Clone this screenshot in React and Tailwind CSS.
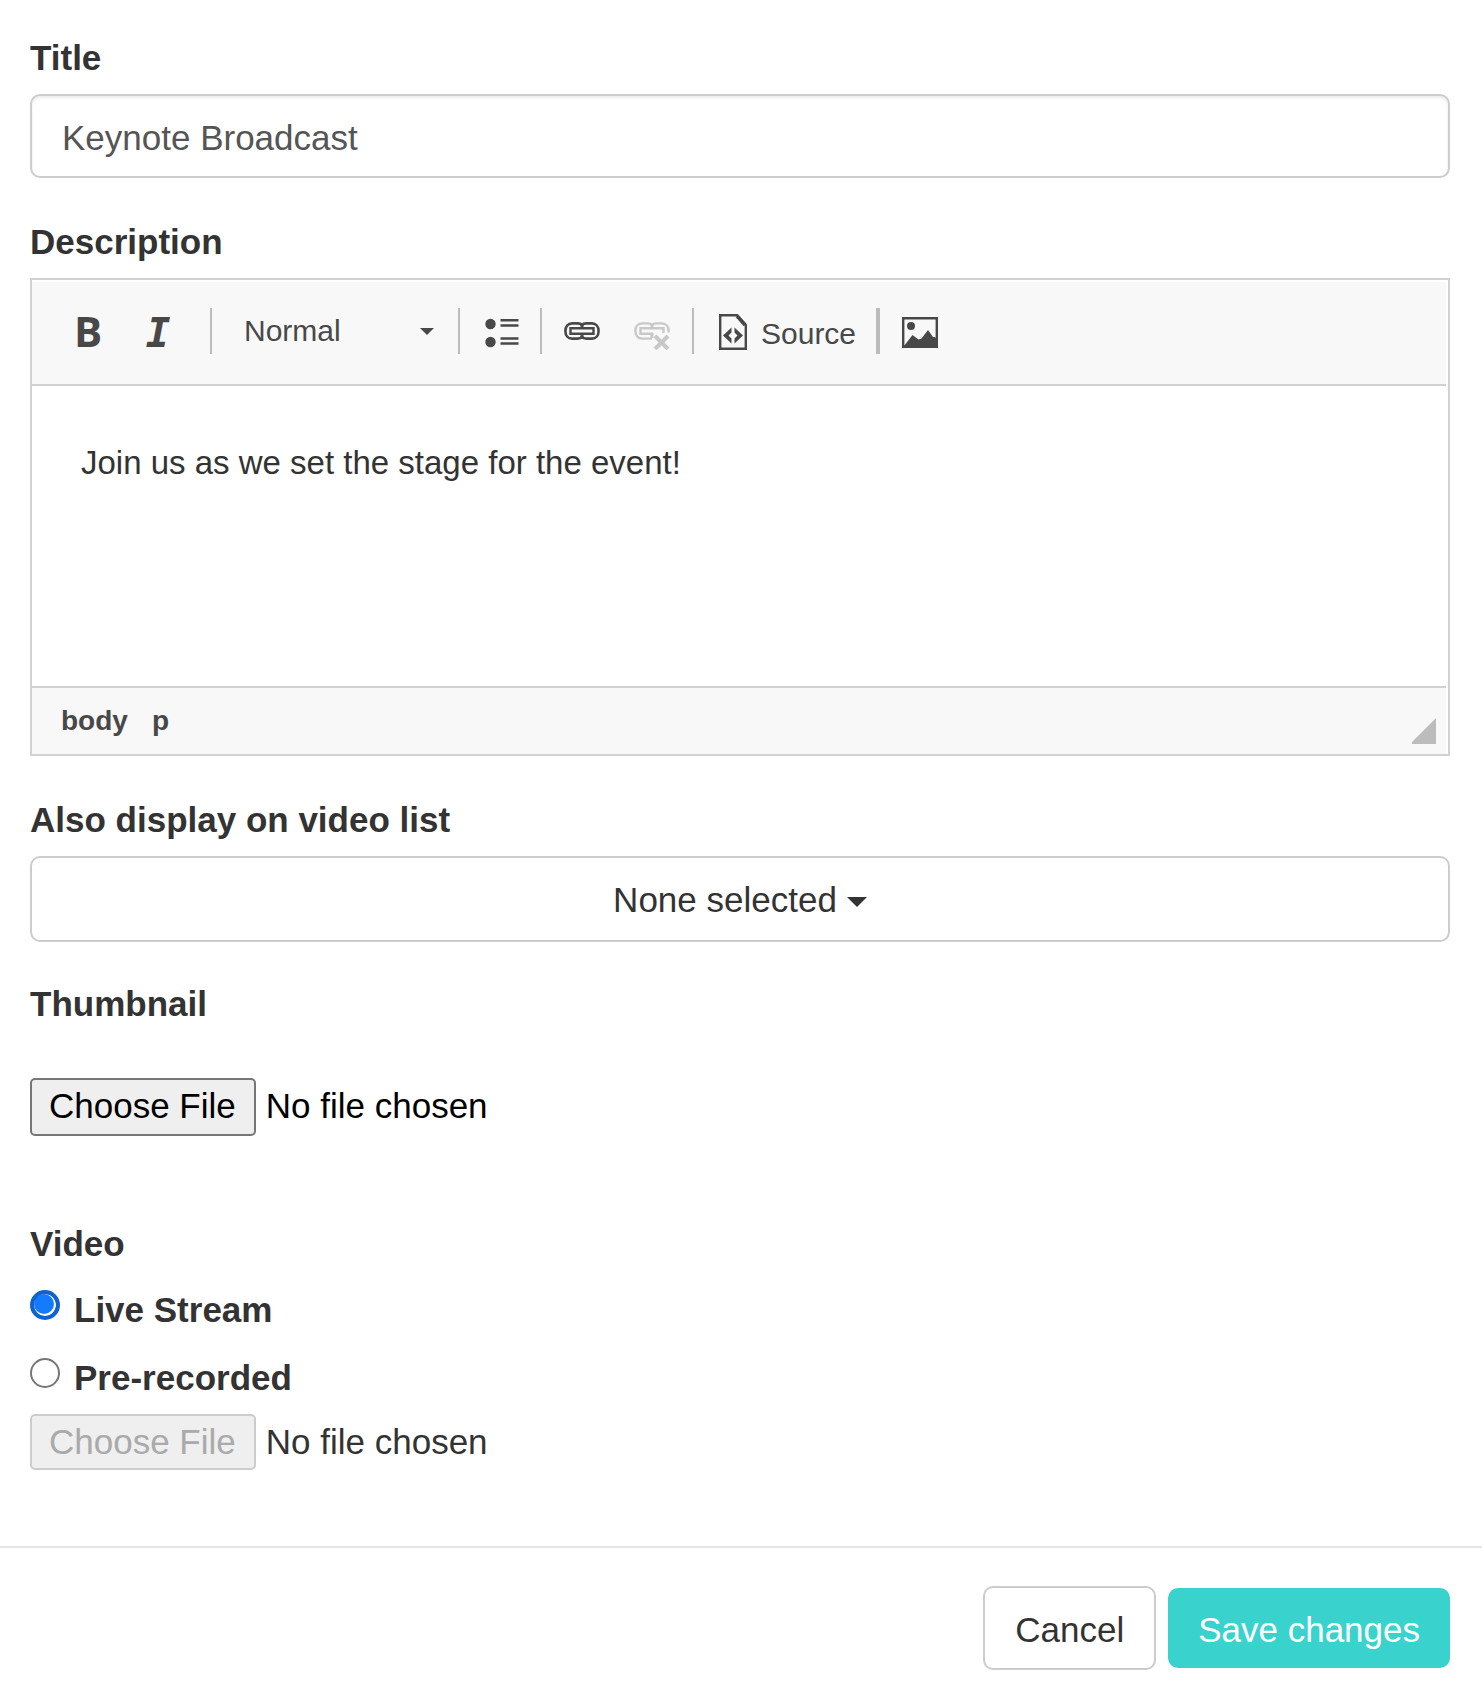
import { useState } from 'react';

const VIDEO_LISTS = ['None selected', 'Keynotes', 'Workshops', 'On demand'];
const FORMATS = ['Normal', 'Heading 1', 'Heading 2', 'Formatted'];

const LABEL = 'block text-[35px] leading-[50px] font-bold text-[#333]';
const FILE_INPUT =
  'block w-full text-[35px] leading-[40px] file:mr-[10px] file:rounded-[5px] file:border-2 file:border-solid file:bg-[#efefef] file:pr-[18px] file:pl-[17px]';
const RADIO = 'mt-[5px] size-[30px] shrink-0 appearance-none rounded-full border-2 border-[#767676] bg-white checked:border-4 checked:border-[#0f62cf] checked:bg-[#147aff] checked:shadow-[inset_-1px_-1px_0_1px_#fff]';

function Separator() {
  return <span className="h-[46px] w-[2px] shrink-0 bg-[#bcbcbc]" />;
}

function Caret({ className }) {
  return (
    <svg viewBox="0 0 20 10" className={className} fill="currentColor" aria-hidden="true">
      <path d="M0 0h20L10 10z" />
    </svg>
  );
}

function ListIcon() {
  return (
    <svg width="34" height="30" viewBox="0 0 34 30" fill="currentColor" aria-hidden="true">
      <circle cx="5.500" cy="6" r="5.200" />
      <circle cx="5.500" cy="24" r="5.200" />
      <path d="M15.500 1h18v2.500h-18zM15.500 6.200h18v2.500h-18zM15.500 19.200h18v2.500h-18zM15.500 24.200h18v2.500h-18z" />
    </svg>
  );
}

function LinkIcon() {
  return (
    <svg width="36" height="18" viewBox="0 0 36 18" fill="none" stroke="currentColor" strokeWidth="2.400" aria-hidden="true">
      <path d="M18 3.200C17 1.800 15.500 1.400 13.500 1.400H8C4 1.400 1.400 4.500 1.400 9S4 16.600 8 16.600h5.500c2 0 3.500-.4 4.500-1.800 1 1.400 2.500 1.800 4.500 1.800H28c4 0 6.600-3.100 6.600-7.600S32 1.400 28 1.400h-5.500c-2 0-3.500.4-4.500 1.800z" strokeWidth="2.600" />
      <path d="M6.500 6.200h23v5.600h-23z" />
      <path d="M18 2.500v4.500M18 11v4.500" strokeWidth="3" />
    </svg>
  );
}

function UnlinkIcon() {
  return (
    <svg width="36" height="38" viewBox="0 -10 36 38" fill="none" stroke="currentColor" strokeWidth="2.400" aria-hidden="true">
      <path d="M18 16.600H8C4 16.600 1.400 13.500 1.400 9S4 1.400 8 1.400h5.500c2 0 3.500.4 4.500 1.800 1-1.400 2.500-1.800 4.500-1.800H28c4 0 6.600 3.100 6.600 7.600v1.500" />
      <path d="M19 11.800H6.500V6.200h23V11" />
      <path d="M18 2.500v4.500M18 11v5" strokeWidth="3" />
      <path d="M21 14l13 13M34 14L21 27" strokeWidth="4" />
    </svg>
  );
}

function SourceIcon() {
  return (
    <svg width="28" height="36" viewBox="0 0 28 36" className="mt-[2px]" fill="currentColor" aria-hidden="true">
      <path d="M1.200 1.200h17L26.800 11v23.800H1.200z" fill="none" stroke="currentColor" strokeWidth="2.400" />
      <path d="M18 2l8 9" stroke="currentColor" strokeWidth="3.400" />
      <path d="M12.500 13.500l-8.500 8 8.500 8v-5l-3-3 3-3zM15.500 13.500l8.500 8-8.500 8v-5l3-3-3-3z" />
    </svg>
  );
}

function ImageIcon() {
  return (
    <svg width="36" height="31" viewBox="0 0 36 31" fill="currentColor" aria-hidden="true">
      <path d="M1.200 1.200h33.600v28.600H1.200z" fill="none" stroke="currentColor" strokeWidth="2.400" />
      <circle cx="9" cy="9" r="4" />
      <path d="M2 29L10.500 18l6 4.500 3-1L26 13l5 7h2l2 3v6H2z" />
    </svg>
  );
}

function ToolButton({ label, disabled, className = '', children }) {
  return (
    <button
      type="button"
      aria-label={label}
      disabled={disabled}
      className={`flex h-[60px] w-[70px] shrink-0 items-center justify-center disabled:text-[#c8c8c8] ${className}`}
    >
      {children}
    </button>
  );
}

function DescriptionEditor() {
  const [text, setText] = useState('Join us as we set the stage for the event!');

  return (
    <div className="mt-[11px] border-2 border-[#d1d1d1] pt-[2px] text-[#484848]">
      <div className="mr-[2px] flex h-[104px] items-center border-b-2 border-[#d1d1d1] bg-[#f8f8f8] pb-[4px] pl-[21px]">
        <ToolButton label="Bold">
          <span className="font-['Open_Sans'] text-[42px] leading-none font-bold">B</span>
        </ToolButton>
        <ToolButton label="Italic" className="mr-[17px] pt-[4px]">
          <span className="font-['DejaVu_Sans_Mono'] text-[41px] leading-none font-bold italic">I</span>
        </ToolButton>
        <Separator />
        <div className="relative w-[246px] shrink-0">
          <select
            aria-label="Paragraph format"
            className="block w-full appearance-none bg-transparent pl-[32px] text-[30px] leading-[40px]"
          >
            {FORMATS.map((f) => <option key={f}>{f}</option>)}
          </select>
          <Caret className="pointer-events-none absolute top-[17px] right-[24px] h-[7px] w-[14px]" />
        </div>
        <Separator />
        <ToolButton label="Bulleted list" className="mx-[5px] pt-[4px] pl-[3px]"><ListIcon /></ToolButton>
        <Separator />
        <ToolButton label="Link" className="ml-[5px]"><LinkIcon /></ToolButton>
        <ToolButton label="Unlink" disabled className="mr-[5px]"><UnlinkIcon /></ToolButton>
        <Separator />
        <button type="button" className="flex w-[182px] items-center gap-[14px] pl-[25px] text-[30px] leading-[40px]">
          <SourceIcon />
          <span className="pt-[5px]">Source</span>
        </button>
        <Separator />
        <Separator />
        <ToolButton label="Image" className="ml-[5px] pt-[2px]"><ImageIcon /></ToolButton>
      </div>

      <textarea
        id="description"
        value={text}
        onChange={(e) => setText(e.target.value)}
        className="block h-[300px] w-full resize-none px-[49px] pt-[51px] text-[33px] leading-[52px] text-[#333] outline-none"
      />

      <div className="mr-[2px] flex h-[68px] items-end justify-between border-t-2 border-[#d1d1d1] bg-[#f8f8f8] pr-[10px] pb-[10px] pl-[29px]">
        <div className="flex gap-[24px] pb-[3px] text-[28px] leading-[40px] font-bold">
          <span>body</span>
          <span>p</span>
        </div>
        <svg width="24" height="26" viewBox="0 0 24 26" fill="#bcbcbc" aria-hidden="true">
          <path d="M24 0v26H0v-2z" />
        </svg>
      </div>
    </div>
  );
}

export default function App() {
  const [title, setTitle] = useState('Keynote Broadcast');
  const [source, setSource] = useState('live');

  return (
    <form className="bg-white font-['Liberation_Sans',Arial,sans-serif] text-[#333]" onSubmit={(e) => e.preventDefault()}>
      <div className="pt-[33px] pr-[32px] pb-[76px] pl-[30px]">
        <div className="mb-[39px]">
          <label htmlFor="title" className={LABEL}>Title</label>
          <input
            id="title"
            type="text"
            value={title}
            onChange={(e) => setTitle(e.target.value)}
            className="mt-[11px] block h-[84px] w-full rounded-[10px] border-2 border-[#ccc] bg-white px-[30px] pt-[4px] text-[35px] text-[#555] shadow-[inset_0_2px_3px_rgba(0,0,0,0.08)] outline-none"
          />
        </div>

        <div className="mb-[39px]">
          <label htmlFor="description" className={LABEL}>Description</label>
          <DescriptionEditor />
        </div>

        <div className="mb-[37px]">
          <label htmlFor="video-list" className={LABEL}>Also display on video list</label>
          <div className="mt-[11px] flex h-[86px] items-center justify-center gap-[10px] rounded-[10px] border-2 border-[#ccc] bg-white pt-[2px]">
            <select
              id="video-list"
              className="field-sizing-content appearance-none bg-transparent text-[35px] leading-[50px] outline-none"
            >
              {VIDEO_LISTS.map((v) => <option key={v}>{v}</option>)}
            </select>
            <Caret className="pointer-events-none mt-[4px] h-[10px] w-[20px]" />
          </div>
        </div>

        <div className="mb-[83px]">
          <label htmlFor="thumbnail" className={LABEL}>Thumbnail</label>
          <input
            id="thumbnail"
            type="file"
            className={`${FILE_INPUT} mt-[49px] h-[58px] text-black file:h-[58px] file:border-[#767676] file:pb-[3px] file:text-black`}
          />
        </div>

        <fieldset>
          <legend className={LABEL}>Video</legend>
          <label className="mt-[16px] flex items-start gap-[14px] text-[35px] leading-[50px] font-bold">
            <input
              type="radio"
              name="source"
              checked={source === 'live'}
              onChange={() => setSource('live')}
              className={RADIO}
            />
            Live Stream
          </label>
          <label className="mt-[18px] flex items-start gap-[14px] text-[35px] leading-[50px] font-bold">
            <input
              type="radio"
              name="source"
              checked={source === 'recorded'}
              onChange={() => setSource('recorded')}
              className={RADIO}
            />
            Pre-recorded
          </label>
          <input
            type="file"
            aria-label="Pre-recorded video"
            disabled={source === 'live'}
            className={`${FILE_INPUT} mt-[11px] h-[56px] text-[#333] file:h-[56px] file:border-[#ccc] file:text-[#aaa]`}
          />
        </fieldset>
      </div>

      <div className="flex items-center justify-end gap-[12px] border-t-2 border-[#e5e5e5] pt-[38px] pr-[32px] pb-[32px]">
        <button type="button" className="h-[84px] rounded-[10px] border-2 border-[#ccc] bg-white px-[30px] pt-[4px] text-[35px]">
          Cancel
        </button>
        <button type="submit" className="h-[80px] rounded-[10px] bg-[#3ad2cd] px-[30px] pt-[4px] text-[35px] text-white">
          Save changes
        </button>
      </div>
    </form>
  );
}
